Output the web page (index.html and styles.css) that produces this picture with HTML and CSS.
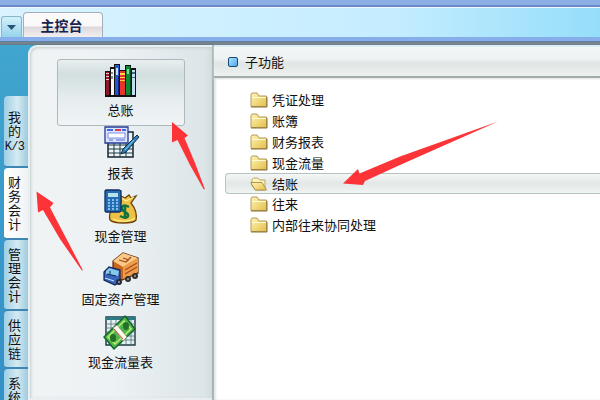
FILE: index.html
```html
<!DOCTYPE html>
<html lang="zh-CN">
<head>
<meta charset="utf-8">
<title>主控台</title>
<link rel="stylesheet" href="styles.css">
</head>
<body>
<div class="window">
  <div class="titlebar"></div>
  <header class="tabbar">
    <div class="tab-menu"><svg width="9" height="5"><path d="M0 0h9L4.500 5z" fill="#255579"/></svg></div>
    <div class="tab">主控台</div>
  </header>
  <div class="rule"></div>
  <main class="body">
    <nav class="rail">
      <div class="rail-tab first">我<br>的<br><span class="latin">K/3</span></div>
      <div class="rail-tab active">财<br>务<br>会<br>计</div>
      <div class="rail-tab third">管<br>理<br>会<br>计</div>
      <div class="rail-tab fourth">供<br>应<br>链</div>
      <div class="rail-tab fifth">系<br>统</div>
    </nav>
    <section class="modules">
      <div class="module selected">
        <svg width="34" height="34" viewBox="0 0 34 34" shape-rendering="crispEdges">
          <path d="M1 7h5V3h4V0h6v6h5V1h6v3h5v29H1z" fill="#111"/>
          <path d="M2 8h3v23H2z" fill="#8f1729"/><path d="M2 9h3v1H2zm0 3h3v1H2zm0 3h3v1H2z" fill="#f2c9c9"/>
          <path d="M7 5h3v26H7z" fill="#f6f6f6"/><path d="M7 8h2v2H7zm0 4h2v3H7z" fill="#8b8f98"/>
          <path d="M11 1h4v30h-4z" fill="#2456cd"/><path d="M12 4h2v7h-2z" fill="#c8dcff"/><path d="M14 12h1v19h-1z" fill="#10267d"/>
          <path d="M16 7h5v24h-5z" fill="#e8342a"/><path d="M16 9h5v2h-5zm0 4h5v1h-5zm0 3h5v1h-5z" fill="#ffd640"/>
          <path d="M22 2h4v29h-4z" fill="#0b8a32"/><path d="M23 5h2v5h-2z" fill="#83d895"/><path d="M26 3h1v28h-1z" fill="#07431d"/>
          <path d="M28 6h3v25h-3z" fill="#bfe0f2"/><path d="M28 8h3v2h-3zm0 5h3v1h-3z" fill="#3f6b8b"/>
        </svg>
        <span>总账</span>
      </div>
      <div class="module">
        <svg width="34" height="34" viewBox="0 0 34 34">
          <path d="M4 6h25v25H4z" fill="#eef4f5" stroke="#16262e" stroke-width="1.500"/>
          <path d="M4 19h25M4 23h25M4 27h25M10 16v15M16 16v15M22 6v25" stroke="#1d3944"/>
          <path d="M1 1h23v16H1z" fill="#dae3ff" stroke="#223b93" stroke-width="1.300"/>
          <path d="M3 3h6v2H3z" fill="#416ce5"/><path d="M11 3h6v2h-6z" fill="#dd3851"/><path d="M18 3h4v2h-4z" fill="#416ce5"/>
          <path d="M4 7h17v5H4z" fill="#fff" stroke="#7f8be0"/><path d="M5 14h4m3 0h9" stroke="#5367c5"/>
          <path d="M33 9l2 2-13 15-5 2 2-5z" fill="#2d81bd" stroke="#12334c"/><path d="M30 14l-9 10" stroke="#8ed4f3"/>
        </svg>
        <span>报表</span>
      </div>
      <div class="module">
        <svg width="34" height="34" viewBox="0 0 34 34">
          <path d="M17 7l4 2 4-3 2 3 5-2-5 7c4 5 6 12 5 17-3 4-22 4-26 0-2-7 3-13 11-17z" fill="#eec046" stroke="#70430b" stroke-width="1.300"/>
          <path d="M18 9l4 3 8-4M9 30c6 3 17 3 22-1" fill="none" stroke="#fff08b" stroke-width="1.300"/>
          <path d="M25 18c-7-4-10 2-4 5s3 8-5 4M21 16v14" fill="none" stroke="#11723d" stroke-width="2.500"/>
          <path d="M2 1h13l2 1v20l-2 1H2L1 22V2z" fill="#276bb2" stroke="#102f5f" stroke-width="1.300"/>
          <path d="M4 4h10v4H4z" fill="#b8e2ec"/>
          <path d="M4 11h2m2 0h2m2 0h2M4 14h2m2 0h2m2 0h2M4 17h2m2 0h2m2 0h2M4 20h2m2 0h2m2 0h2" stroke="#a2dcff" stroke-width="1.500"/>
        </svg>
        <span>现金管理</span>
      </div>
      <div class="module">
        <svg width="36" height="34" viewBox="0 0 36 34">
          <path d="M10 9L20 1l15 5v15L19 28l-9-5z" fill="#c7661e" stroke="#5d2b10" stroke-width="1.200"/>
          <path d="M10 9L20 1l15 5-15 9z" fill="#f9ca86"/><path d="M20 15l15-9v14l-15 7z" fill="#ee9c4a"/>
          <path d="M16 8l7 2 5-5m-8 1l6 2M22 18l12-7M22 22l12-7" fill="none" stroke="#a7481b" stroke-width="1.300"/>
          <path d="M1 20l5-5 11 3v12l-5 3-11-5z" fill="#3665bd" stroke="#142354" stroke-width="1.200"/>
          <path d="M3 19l3-3 10 3-1 5-12-2z" fill="#83c9ed"/><path d="M4 22l9 2m-6-5v3" stroke="#17264d"/>
          <path d="M2 26l9 3" stroke="#c9e8ff"/><circle cx="16" cy="30" r="3" fill="#222a39"/><circle cx="25" cy="27" r="3" fill="#30302f"/><circle cx="32" cy="24" r="3" fill="#30302f"/><path d="M24 27h2m5-3h2m-18 6h2" stroke="#ddd"/>
        </svg>
        <span>固定资产管理</span>
      </div>
      <div class="module">
        <svg width="34" height="34" viewBox="0 0 34 34">
          <path d="M2 2h29v28H2z" fill="#e2f1f2" stroke="#203740" stroke-width="1.400"/><path d="M2 2h29v3H2z" fill="#287a86"/>
          <path d="M2 9h29M2 13h29M2 17h29M2 21h29M2 25h29M7 3v27M12 3v27M17 3v27M22 3v27M27 3v27" stroke="#57717a" stroke-width=".8"/>
          <path d="M0 22L21 1l10 13-21 20z" fill="#50b64b" stroke="#12612b" stroke-width="1.400"/>
          <path d="M4 22L20 6l7 8-16 15z" fill="none" stroke="#bdec70" stroke-width="1.500"/>
          <ellipse cx="9" cy="23" rx="3" ry="4" fill="#246f2b"/><ellipse cx="22" cy="11" rx="3" ry="4" fill="#246f2b"/>
          <path d="M9 13l4-3 10 12-4 4z" fill="#fffdf0" stroke="#79815d" stroke-width=".6"/><path d="M10 14l9 10" stroke="#c94432"/>
        </svg>
        <span>现金流量表</span>
      </div>
    </section>
    <section class="functions">
      <h1><i></i>子功能</h1>
      <ul>
        <li><svg class="folder" width="18" height="16"><use href="#closed"/></svg>凭证处理</li>
        <li><svg class="folder" width="18" height="16"><use href="#closed"/></svg>账簿</li>
        <li><svg class="folder" width="18" height="16"><use href="#closed"/></svg>财务报表</li>
        <li><svg class="folder" width="18" height="16"><use href="#closed"/></svg>现金流量</li>
        <li class="current"><svg class="folder" width="18" height="16"><path d="M2 10V3.500l1.500-1.500h4l2 2h5.500v10H6z" fill="#fff5b7" stroke="#b8a468"/><path d="M.8 6.500H12l4.500 7.500H5z" fill="url(#gold)" stroke="#ac9450"/></svg>结账</li>
        <li><svg class="folder" width="18" height="16"><use href="#closed"/></svg>往来</li>
        <li><svg class="folder" width="18" height="16"><use href="#closed"/></svg>内部往来协同处理</li>
      </ul>
    </section>
  </main>
  <svg class="arrows" width="600" height="400">
    <defs>
      <linearGradient id="gold" x2="1" y2="1"><stop stop-color="#fff7b8"/><stop offset="1" stop-color="#e4bd48"/></linearGradient>
      <g id="closed"><path d="M1 14.500V2.500L2 1h5l2 3h7.500v10.500z" fill="url(#gold)" stroke="#b29a56"/><path d="M2 5.500h14" stroke="#fffad4"/><path d="M1 15h16V5" fill="none" stroke="#8b7436"/></g>
    </defs>
    <g fill="#fc3438">
      <path d="M172 122L188 135.500L184.500 138L195 163L205 189.500L203.500 189L190 165L177.500 140L172 142.500z"/>
      <path d="M36.500 191.500L53.500 203L50 207.500L66 238L83 270.500L81.500 270L60 239L43 210L38 212.500z"/>
      <path d="M343 183.500L358 169L359.500 173.500L400 156.500L498 121.500L400 165L365 181L363 185z"/>
    </g>
  </svg>
</div>
</body>
</html>
```
FILE: styles.css
```css
* { box-sizing: border-box; }
body { margin: 0; color: #111; font: 13px/16px "Noto Sans CJK SC", sans-serif; }
.window { position: relative; width: 600px; height: 400px; overflow: hidden; display: flex; flex-direction: column; background: #3c9aca; }
.titlebar { height: 7px; background: #8baee7; border-bottom: 2px solid #6c87c5; }
.tabbar { height: 30px; display: flex; align-items: flex-end; gap: 1px; padding-left: 1px; background: linear-gradient(90deg, #d9f3ff, #c5edff 65%, #95defa); border-top: 1px solid #edf8ff; }
.tab-menu { width: 21px; height: 21px; display: grid; place-items: center; border: 1px solid #86b8ca; border-bottom: 0; border-radius: 3px 3px 0 0; background: linear-gradient(#d2f0fa, #96d4ea); }
.tab { width: 80px; height: 25px; padding-right: 3px; text-align: center; font-size: 14px; line-height: 25px; font-weight: 700; color: #17234f; border: 1px solid #a6aebd; border-bottom: 0; border-radius: 4px 4px 0 0; background: linear-gradient(#fafafb 0 54%, #dcd9dc 58%, #f3eeee); }
.rule { height: 8px; background: linear-gradient(#86aeea 0 4px, #5e7fa6 4px 5px, #76838a 5px 7px, #677c89 7px); }
.body { flex: 1; min-height: 0; display: flex; background: linear-gradient(#40a5cf, #348fc6); }
.rail { width: 28px; padding: 51px 0 0 4px; display: flex; flex-direction: column; flex: none; }
.rail-tab { flex: none; height: 72px; padding: 7px 3px 0 0; text-align: center; line-height: 14px; border-bottom: 2px solid #3e87b4; border-radius: 4px 0 0 4px; background: linear-gradient(90deg, #9ccfe5, #d5eaf2 55%, #9fcbdf); }
.rail-tab .latin { font: 12px/14px "Liberation Mono", monospace; letter-spacing: -.7px; }
.first { padding-top: 14px; }
.active { background: linear-gradient(90deg, #fff, #f0f3f5); }
.third { height: 71px; }
.fourth { height: 58px; }
.fifth { height: 80px; }
.modules { width: 184px; flex: none; padding: 12px 0 0 27px; border: 2px solid #e9eff0; border-right: 0; border-radius: 9px 0 0; background: linear-gradient(90deg, #f0f3f4, #edf2f4 45%, #dce5e8 96%, #d3dddd); box-shadow: inset 1px 1px 3px #c0cccf; }
.module { width: 128px; height: 63px; display: flex; flex-direction: column; align-items: center; }
.module svg { flex: none; overflow: visible; }
.module span { margin-top: 5px; padding-right: 1px; white-space: nowrap; }
.module.selected { height: 67px; padding-top: 4px; border: 1px solid #aeb9bc; border-radius: 3px; background: linear-gradient(#e9efef, #d2dedf 22%, #e6edee 60%, #f0f4f6); }
.selected span { margin-top: 4px; }
.functions { flex: 1; background: #fff; border-left: 2px solid #a9b7b4; box-shadow: inset 2px 0 2px #e1e7e5; }
h1 { margin: 0; height: 33px; display: flex; align-items: center; padding: 0 0 0 14px; gap: 7px; font-size: 13px; font-weight: 400; border-top: 2px solid #d9eff4; border-bottom: 2px solid #a2adaa; background: linear-gradient(#f3f6f6, #eef2f2 40%, #e0e6e5 55%, #edf1f0); box-shadow: 0 1px 2px #dce1df; }
h1 i { width: 10px; height: 10px; border: 1px solid #164a70; border-radius: 2px; background: linear-gradient(135deg, #a5e2ff, #55aae7); }
ul { list-style: none; padding: 12px 0 0 11px; margin: 0; }
li { height: 20.800px; display: flex; align-items: center; gap: 4px; padding-left: 24px; border: 1px solid transparent; border-right: 0; }
.current { border-color: #b5c4c0; border-radius: 4px 0 0 4px; background: linear-gradient(#f4f7f6, #e2e8e7 50%, #f0f4f3); }
.arrows { position: absolute; inset: 0; pointer-events: none; }
```
